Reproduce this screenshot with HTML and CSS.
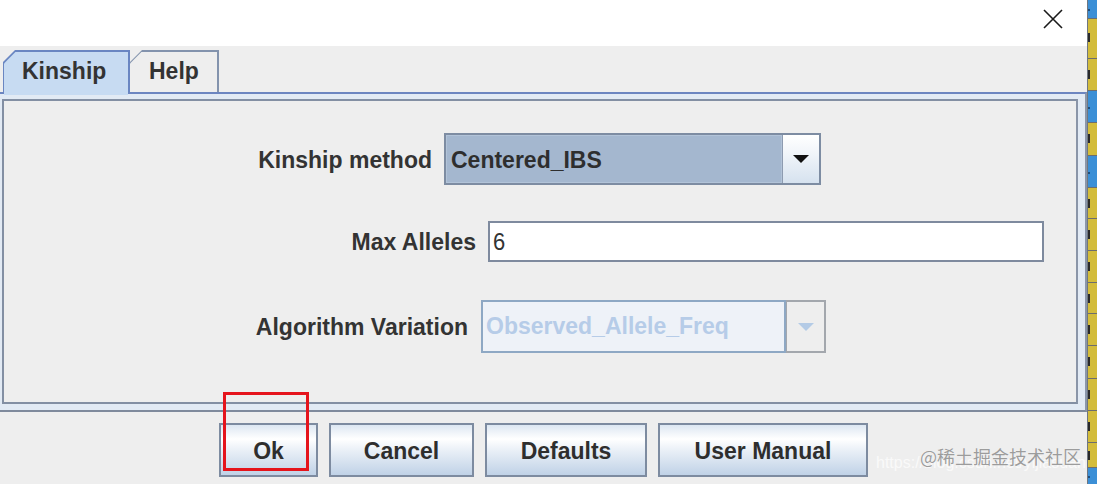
FILE: index.html
```html
<!DOCTYPE html>
<html>
<head>
<meta charset="utf-8">
<link rel="stylesheet" href="styles.css">
</head>
<body>
<div class="page">
  <div class="dialog">
    <div class="titlebar">
      <svg class="close" width="20" height="20" viewBox="0 0 20 20"><path d="M1 1 L19 19 M19 1 L1 19" stroke="#1a1a1a" stroke-width="1.6" fill="none"/></svg>
    </div>
    <div class="body">
      <div class="tabs">
        <div class="tab tab-kinship"><div class="tab-in"><span class="t">Kinship</span></div></div>
        <div class="tab tab-help"><div class="tab-in"><span class="t">Help</span></div></div>
      </div>
      <div class="frame">
        <div class="panel">
          <div class="row row1">
            <div class="label"><span class="t">Kinship method</span></div>
            <div class="combo">
              <div class="combo-text"><span class="t">Centered_IBS</span></div>
              <div class="combo-btn"><svg width="16" height="8" viewBox="0 0 16 8"><polygon points="0,0 16,0 8,8" fill="#111"/></svg></div>
            </div>
          </div>
          <div class="row row2">
            <div class="label"><span class="t">Max Alleles</span></div>
            <div class="field"><span class="t">6</span></div>
          </div>
          <div class="row row3">
            <div class="label"><span class="t">Algorithm Variation</span></div>
            <div class="dcombo">
              <div class="dcombo-text"><span class="t">Observed_Allele_Freq</span></div>
              <div class="dcombo-btn"><svg width="16" height="8" viewBox="0 0 16 8"><polygon points="0,0 16,0 8,8" fill="#b4cbe6"/></svg></div>
            </div>
          </div>
        </div>
      </div>
      <div class="buttons">
        <div class="btn btn-ok"><span class="t">Ok</span></div>
        <div class="btn btn-cancel"><span class="t">Cancel</span></div>
        <div class="btn btn-defaults"><span class="t">Defaults</span></div>
        <div class="btn btn-manual"><span class="t">User Manual</span></div>
      </div>
    </div>
  </div>
  <div class="strip">
    <div class="seg blue h18"></div>
    <div class="seg yellow h40"></div>
    <div class="seg yellow h32"></div>
    <div class="seg blue h32"></div>
    <div class="seg yellow h33"></div>
    <div class="seg blue h32"></div>
    <div class="seg yellow h31"></div>
    <div class="seg yellow h32"></div>
    <div class="seg yellow h32"></div>
    <div class="seg yellow h31"></div>
    <div class="seg yellow h32"></div>
    <div class="seg yellow h33"></div>
    <div class="seg yellow h32"></div>
    <div class="seg yellow h32"></div>
    <div class="seg yellow h25"></div>
    <div class="seg blue h17"></div>
  </div>
  <div class="highlight"></div>
  <div class="wm-url">https://blog.csdn.net/yijiasuan</div>
  <div class="wm">@稀土掘金技术社区</div>
</div>
</body>
</html>
```

FILE: styles.css
```css
* { box-sizing: border-box; }
html, body { margin: 0; padding: 0; }
html { background: #d3bc3b; overflow: hidden; }
body {
  height: 484px;
  overflow: hidden;
  font-family: "Liberation Sans", Arial, sans-serif;
  background: #d3bc3b;
}
.page {
  position: relative;
  display: flex;
  width: 100%;
  height: 484px;
  overflow: hidden;
  background: #d3bc3b;
}
.t {
  display: inline-block;
  transform: scaleY(1.08);
}
.dialog {
  flex: 1;
  min-width: 0;
  display: flex;
  flex-direction: column;
  background: #eeeeee;
}
.titlebar {
  height: 46px;
  background: #ffffff;
  display: flex;
  justify-content: flex-end;
  align-items: flex-start;
  padding: 9px 24px 0 0;
}
.body {
  flex: 1;
  background: #eeeeee;
}
.tabs {
  display: flex;
  height: 46px;
  padding: 4px 0 0 3px;
  position: relative;
  z-index: 2;
}
.tab {
  position: relative;
  height: 42px;
  padding: 2px 2px 0 1px;
  background: #8393ad;
  clip-path: polygon(0 12px, 12px 0, 100% 0, 100% 100%, 0 100%);
}
.tab-in {
  height: 100%;
  background: #eeeeee;
  clip-path: polygon(0 11.4px, 11.4px 0, 100% 0, 100% 100%, 0 100%);
  font-weight: bold;
  font-size: 23px;
  color: #333333;
  line-height: 37px;
}
.tab-kinship {
  width: 127px;
  background: #6a86c2;
  clip-path: polygon(0 12px, 12px 0, 100% 0, 100% 46px, 0 46px);
}
.tab-kinship::after {
  content: "";
  position: absolute;
  left: 1px;
  right: 2px;
  top: 40px;
  height: 5px;
  background: #c7dbf2;
}
.tab-kinship .tab-in {
  background: #c7dbf2;
  padding-left: 18px;
}
.tab-help {
  width: 89px;
  padding-left: 0;
}
.tab-help .tab-in {
  padding-left: 19px;
}
.frame {
  height: 320px;
  border-top: 2px solid #6c85c0;
  border-right: 2px solid #8b97aa;
  border-bottom: 2px solid #7f8a9c;
  background: #e2eaf4;
  padding: 5px 7px 6px 2px;
  position: relative;
  z-index: 1;
}
.panel {
  height: 100%;
  border: 2px solid #838fa3;
  border-right-color: #8a95a8;
  background: #eeeeee;
  padding-top: 32px;
}
.row {
  display: flex;
  align-items: center;
}
.label {
  flex: none;
  text-align: right;
  font-weight: bold;
  font-size: 23px;
  color: #333333;
}
.row1 { height: 52px; }
.row1 .label { width: 428px; margin-right: 12px; }
.row2 { height: 41px; margin-top: 36px; }
.row2 .label { width: 472px; margin-right: 12px; }
.row3 { height: 53px; margin-top: 38px; }
.row3 .label { width: 464px; margin-right: 13px; }
.combo {
  flex: none;
  width: 377px;
  height: 52px;
  display: flex;
  border: 2px solid #7d8ca2;
  background: #a4b7cf;
}
.combo-text {
  flex: 1;
  font-weight: bold;
  font-size: 23px;
  color: #2e2e2e;
  padding-left: 4px;
  line-height: 46px;
  border: 1px solid #b2c3d8;
}
.combo-btn {
  width: 37px;
  display: flex;
  align-items: center;
  justify-content: center;
  border-left: 1px solid #8d9bb0;
  background: linear-gradient(to bottom, #ffffff 0%, #f2f6fa 35%, #d6e2ef 100%);
}
.field {
  flex: none;
  width: 556px;
  height: 41px;
  border: 2px solid #7e8a9e;
  background: #ffffff;
  font-size: 22px;
  color: #333333;
  padding-left: 3px;
  line-height: 37px;
}
.dcombo {
  flex: none;
  width: 345px;
  height: 53px;
  display: flex;
}
.dcombo-text {
  flex: 1;
  border: 2px solid #8ea8c4;
  background: #eef2f8;
  font-weight: bold;
  font-size: 23px;
  color: #b6cce8;
  padding-left: 3px;
  line-height: 47px;
}
.dcombo-btn {
  width: 40px;
  border: 2px solid #a3a7ad;
  border-left-width: 1px;
  background: #eeeeee;
  display: flex;
  align-items: center;
  justify-content: center;
}
.buttons {
  display: flex;
  justify-content: center;
  gap: 11px;
  padding-top: 11px;
}
.btn {
  flex: none;
  height: 54px;
  border: 2px solid #7d8ba0;
  background: linear-gradient(to bottom, #dde7f2 0%, #ffffff 28%, #eaf0f7 50%, #c0d2e7 100%);
  font-weight: bold;
  font-size: 23px;
  color: #2e2e2e;
  display: flex;
  align-items: center;
  justify-content: center;
}
.btn-ok { width: 99px; }
.btn-cancel { width: 145px; }
.btn-defaults { width: 162px; }
.btn-manual { width: 210px; }
.strip {
  flex: none;
  width: 10px;
  height: 484px;
  display: flex;
  flex-direction: column;
  border-left: 1px solid #6f7680;
  background: #d3bc3b;
}
.seg {
  flex: none;
  width: 100%;
  border-top: 1px solid #6d6d6d;
  position: relative;
}
.seg::before {
  content: "";
  position: absolute;
  left: 0;
  top: 35%;
  width: 2px;
  height: 9px;
  background: #2a2a2a;
}
.seg.blue::before { background: #1d4f80; height: 2px; top: 50%; }
.seg:first-child { border-top: none; }
.yellow { background: #d3bc3b; }
.blue { background: #3b8fd6; }
.h17 { height: 17px; }
.h18 { height: 18px; }
.h25 { height: 25px; }
.h31 { height: 31px; }
.h32 { height: 32px; }
.h33 { height: 33px; }
.h40 { height: 40px; }
.highlight {
  position: absolute;
  z-index: 5;
  left: 223px;
  top: 392px;
  width: 86px;
  height: 79px;
  border: 3px solid #e5141c;
}
.wm-url {
  position: absolute;
  z-index: 5;
  left: 876px;
  top: 454px;
  font-family: "Liberation Sans", Arial, sans-serif;
  font-size: 16px;
  line-height: 18px;
  color: rgba(255, 255, 255, 0.7);
  white-space: nowrap;
}
.wm {
  position: absolute;
  z-index: 6;
  left: 920px;
  top: 443px;
  font-family: "Noto Sans CJK SC", sans-serif;
  font-size: 18px;
  line-height: 26px;
  color: #9c9c9c;
  text-shadow: 0 0 1px #ffffff;
  white-space: nowrap;
}
```
